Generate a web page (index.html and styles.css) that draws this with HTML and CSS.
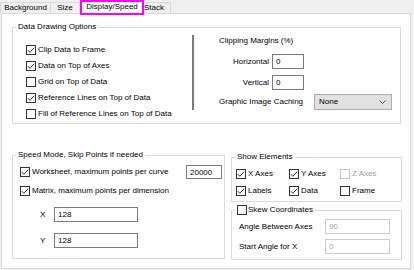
FILE: index.html
```html
<!DOCTYPE html>
<html lang="en">

<head>
  <meta charset="UTF-8">
  <title>Display/Speed</title>
  <link rel="stylesheet" href="styles.css">
</head>

<body>
  <div class="tabs">
    <div class="tab tab-bg">Background</div>
    <div class="tab tab-size">Size</div>
    <div class="tab tab-active">Display/Speed</div>
    <div class="tab tab-stack">Stack</div>
  </div>

  <div class="panel">
    <fieldset class="group draw">
      <legend>Data Drawing Options</legend>
      <div class="draw-body">
        <div class="draw-checks">
          <label class="check"><span class="box"><svg viewBox="0 0 8 8"><path d="M0.8 4.2l2.1 2.1 4.3-4.6"/></svg></span>Clip Data to Frame</label>
          <label class="check"><span class="box"><svg viewBox="0 0 8 8"><path d="M0.8 4.2l2.1 2.1 4.3-4.6"/></svg></span>Data on Top of Axes</label>
          <label class="check"><span class="box"></span>Grid on Top of Data</label>
          <label class="check"><span class="box"><svg viewBox="0 0 8 8"><path d="M0.8 4.2l2.1 2.1 4.3-4.6"/></svg></span>Reference Lines on Top of Data</label>
          <label class="check"><span class="box"></span>Fill of Reference Lines on Top of Data</label>
        </div>
        <div class="sep"></div>
        <div class="draw-clip">
          <div class="clip-title">Clipping Margins (%)</div>
          <div class="field"><span class="field-label">Horizontal</span><span class="input">0</span></div>
          <div class="field field-v"><span class="field-label">Vertical</span><span class="input">0</span></div>
          <div class="field field-cache">
            <span class="field-label">Graphic Image Caching</span>
            <span class="select">None<svg viewBox="0 0 7 4"><path d="M0.5 0.5l3 3 3-3"/></svg></span>
          </div>
        </div>
      </div>
    </fieldset>

    <div class="bottom">
      <fieldset class="group speed">
        <legend>Speed Mode, Skip Points if needed</legend>
        <div class="speed-body">
          <div class="speed-row">
            <label class="check"><span class="box"><svg viewBox="0 0 8 8"><path d="M0.8 4.2l2.1 2.1 4.3-4.6"/></svg></span>Worksheet, maximum points per curve</label>
            <span class="input input-pts">20000</span>
          </div>
          <div class="speed-row speed-matrix">
            <label class="check"><span class="box"><svg viewBox="0 0 8 8"><path d="M0.8 4.2l2.1 2.1 4.3-4.6"/></svg></span>Matrix, maximum points per dimension</label>
          </div>
          <div class="dim dim-x"><span class="dim-label">X</span><span class="input input-dim">128</span></div>
          <div class="dim dim-y"><span class="dim-label">Y</span><span class="input input-dim">128</span></div>
        </div>
      </fieldset>

      <div class="side">
        <fieldset class="group show">
          <legend>Show Elements</legend>
          <div class="show-grid">
            <label class="check"><span class="box"><svg viewBox="0 0 8 8"><path d="M0.8 4.2l2.1 2.1 4.3-4.6"/></svg></span>X Axes</label>
            <label class="check"><span class="box"><svg viewBox="0 0 8 8"><path d="M0.8 4.2l2.1 2.1 4.3-4.6"/></svg></span>Y Axes</label>
            <label class="check disabled"><span class="box"></span>Z Axes</label>
            <label class="check"><span class="box"><svg viewBox="0 0 8 8"><path d="M0.8 4.2l2.1 2.1 4.3-4.6"/></svg></span>Labels</label>
            <label class="check"><span class="box"><svg viewBox="0 0 8 8"><path d="M0.8 4.2l2.1 2.1 4.3-4.6"/></svg></span>Data</label>
            <label class="check"><span class="box"></span>Frame</label>
          </div>
        </fieldset>

        <fieldset class="group skew">
          <legend><label class="check"><span class="box"></span>Skew Coordinates</label></legend>
          <div class="skew-body">
            <div class="skew-row"><span class="skew-label">Angle Between Axes</span><span class="input input-off">90</span></div>
            <div class="skew-row skew-start"><span class="skew-label">Start Angle for X</span><span class="input input-off">0</span></div>
          </div>
        </fieldset>
      </div>
    </div>
  </div>
</body>

</html>
```

FILE: styles.css
```css
html {
  box-sizing: border-box;
  font-family: 'Liberation Sans', Arial, sans-serif;
  font-size: 8px;
}

*,
*::after,
*::before {
  box-sizing: inherit;
}

body {
  margin: 0;
  width: 414px;
  height: 270px;
  overflow: hidden;
  line-height: 10px;
  color: #000;
  background-color: #f0f0f0;
}

/* tabs */
.tabs {
  display: flex;
  align-items: flex-start;
  height: 13px;
}

.tab {
  margin-top: 2px;
  height: 11px;
  line-height: 10px;
  text-align: center;
  white-space: nowrap;
  border-top: 1px solid #d9d9d9;
  border-right: 1px solid #d9d9d9;
  background-color: #f0f0f0;
}

.tab-bg {
  width: 51px;
  border-left: 1px solid #d9d9d9;
}

.tab-size {
  width: 29px;
}

.tab-active {
  position: relative;
  z-index: 1;
  margin-top: 0;
  width: 64px;
  height: 15px;
  line-height: 9px;
  border: 2px solid #ff00ff;
  background-color: #fff;
}

.tab-stack {
  width: 27px;
  text-align: left;
}

/* panel */
.panel {
  margin-left: 1px;
  width: 410px;
  height: 256px;
  padding: 8px 0 0 10px;
  border: 1px solid #d9d9d9;
  background-color: #fff;
}

.group {
  margin: 0;
  padding: 0;
  min-width: 0;
  border: 1px solid #dcdcdc;
}

.group legend {
  margin-left: 3px;
  padding: 0 2px;
  line-height: 10px;
}

/* checkboxes */
.check {
  display: flex;
  align-items: center;
  white-space: nowrap;
}

.box {
  display: flex;
  flex: none;
  width: 10px;
  height: 10px;
  margin-right: 2px;
  border: 1px solid #333;
  background-color: #fff;
}

.box svg {
  width: 8px;
  height: 8px;
  fill: none;
  stroke: #333;
  stroke-width: 1;
}

.check.disabled {
  color: #a0a0a0;
}

.check.disabled .box {
  border-color: #c4c4c4;
}

/* inputs */
.input {
  display: block;
  flex: none;
  height: 15px;
  padding: 1px 3px 0;
  line-height: 11px;
  border: 1px solid #7a7a7a;
  background-color: #fff;
}

.input-off {
  color: #a8a8a8;
  border-color: #cccccc;
}

/* data drawing options */
.draw {
  width: 389px;
}

.draw-body {
  display: flex;
  padding: 3px 0 1px 13px;
}

.draw-checks {
  width: 166px;
  padding-top: 7px;
}

.draw-checks .check {
  height: 16px;
}

.sep {
  width: 2px;
  height: 75px;
  background-color: #7a7a7a;
}

.draw-clip {
  padding: 1px 0 0 25px;
}

.field {
  display: flex;
  align-items: center;
  margin-top: 8px;
}

.field .field-label {
  width: 50px;
  margin-right: 3px;
  text-align: right;
}

.field .input {
  width: 32px;
}

.field-v {
  margin-top: 6px;
}

.field-cache {
  margin-top: 4px;
}

.field-cache .field-label {
  width: 95px;
  margin-right: 0;
  text-align: left;
}

.select {
  display: flex;
  align-items: center;
  justify-content: space-between;
  width: 78px;
  height: 16px;
  padding: 0 5px 0 4px;
  border: 1px solid #adadad;
  background-color: #e1e1e1;
}

.select svg {
  width: 7px;
  height: 4px;
  fill: none;
  stroke: #555;
  stroke-width: 1;
}

/* bottom groups */
.bottom {
  display: flex;
  align-items: flex-start;
  gap: 6px;
  margin-top: 26px;
}

.speed {
  width: 213px;
}

.speed-body {
  padding: 4px 2px 10px 7px;
}

.speed-row {
  display: flex;
  align-items: center;
  justify-content: space-between;
  height: 16px;
}

.speed-matrix {
  margin-top: 3px;
}

.input-pts {
  width: 36px;
  height: 14px;
}

.dim {
  display: flex;
  align-items: center;
  margin-top: 8px;
  padding-left: 20px;
}

.dim-y {
  margin-top: 11px;
}

.dim-label {
  width: 14px;
}

.input-dim {
  width: 84px;
}

.side {
  width: 171px;
  margin-top: 2px;
}

.show-grid {
  display: grid;
  grid-template-columns: 53px 51px auto;
  grid-auto-rows: 17px;
  padding: 3px 0 2px 4px;
}

.skew {
  margin-top: 3px;
}

.skew legend .box {
  margin-right: 1px;
}

.skew-body {
  padding: 4px 0 5px 7px;
}

.skew-row {
  display: flex;
  align-items: center;
}

.skew-start {
  margin-top: 5px;
}

.skew-label {
  width: 86px;
}

.skew-row .input {
  width: 65px;
}
```
